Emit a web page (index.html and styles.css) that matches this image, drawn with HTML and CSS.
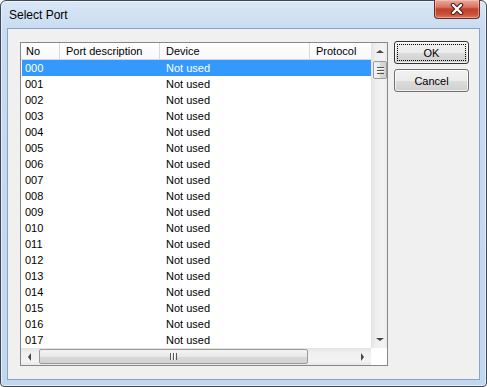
FILE: index.html
```html
<!DOCTYPE html>
<html lang="en">
<head>
    <meta charset="UTF-8">
    <title>Select Port</title>
    <link rel="stylesheet" href="styles.css">
</head>
<body>
    <div class="window">
        <div class="titlebar">
            <span class="title">Select Port</span>
            <button class="close" aria-label="Close">
                <svg width="14" height="12" viewBox="0 0 14 12">
                    <path d="M3 2 L11 10 M11 2 L3 10" stroke="#4a1a14" stroke-width="4.4" stroke-linecap="round"/>
                    <path d="M3 2 L11 10 M11 2 L3 10" stroke="#ffffff" stroke-width="2.4" stroke-linecap="round"/>
                </svg>
            </button>
        </div>
        <div class="client">
            <div class="listview">
                <div class="viewport">
                    <div class="header">
                        <div class="hcol col-no">No</div>
                        <div class="hcol col-desc">Port description</div>
                        <div class="hcol col-dev">Device</div>
                        <div class="hcol col-proto">Protocol</div>
                    </div>
                    <div class="rows">
                        <div class="row selected"><span class="c-no">000</span><span class="c-desc"></span><span class="c-dev">Not used</span><span class="c-proto"></span></div>
                        <div class="row"><span class="c-no">001</span><span class="c-desc"></span><span class="c-dev">Not used</span><span class="c-proto"></span></div>
                        <div class="row"><span class="c-no">002</span><span class="c-desc"></span><span class="c-dev">Not used</span><span class="c-proto"></span></div>
                        <div class="row"><span class="c-no">003</span><span class="c-desc"></span><span class="c-dev">Not used</span><span class="c-proto"></span></div>
                        <div class="row"><span class="c-no">004</span><span class="c-desc"></span><span class="c-dev">Not used</span><span class="c-proto"></span></div>
                        <div class="row"><span class="c-no">005</span><span class="c-desc"></span><span class="c-dev">Not used</span><span class="c-proto"></span></div>
                        <div class="row"><span class="c-no">006</span><span class="c-desc"></span><span class="c-dev">Not used</span><span class="c-proto"></span></div>
                        <div class="row"><span class="c-no">007</span><span class="c-desc"></span><span class="c-dev">Not used</span><span class="c-proto"></span></div>
                        <div class="row"><span class="c-no">008</span><span class="c-desc"></span><span class="c-dev">Not used</span><span class="c-proto"></span></div>
                        <div class="row"><span class="c-no">009</span><span class="c-desc"></span><span class="c-dev">Not used</span><span class="c-proto"></span></div>
                        <div class="row"><span class="c-no">010</span><span class="c-desc"></span><span class="c-dev">Not used</span><span class="c-proto"></span></div>
                        <div class="row"><span class="c-no">011</span><span class="c-desc"></span><span class="c-dev">Not used</span><span class="c-proto"></span></div>
                        <div class="row"><span class="c-no">012</span><span class="c-desc"></span><span class="c-dev">Not used</span><span class="c-proto"></span></div>
                        <div class="row"><span class="c-no">013</span><span class="c-desc"></span><span class="c-dev">Not used</span><span class="c-proto"></span></div>
                        <div class="row"><span class="c-no">014</span><span class="c-desc"></span><span class="c-dev">Not used</span><span class="c-proto"></span></div>
                        <div class="row"><span class="c-no">015</span><span class="c-desc"></span><span class="c-dev">Not used</span><span class="c-proto"></span></div>
                        <div class="row"><span class="c-no">016</span><span class="c-desc"></span><span class="c-dev">Not used</span><span class="c-proto"></span></div>
                        <div class="row"><span class="c-no">017</span><span class="c-desc"></span><span class="c-dev">Not used</span><span class="c-proto"></span></div>
                    </div>
                </div>
                <div class="vscroll">
                    <div class="sbtn"><span class="arrow up"></span></div>
                    <div class="vtrack">
                        <div class="vthumb"><span class="grip-h"></span></div>
                    </div>
                    <div class="sbtn"><span class="arrow down"></span></div>
                </div>
                <div class="hscroll">
                    <div class="sbtn"><span class="arrow left"></span></div>
                    <div class="htrack">
                        <div class="hthumb"><span class="grip-v"></span></div>
                    </div>
                    <div class="sbtn"><span class="arrow right"></span></div>
                </div>
                <div class="corner"></div>
            </div>
            <div class="buttons">
                <button class="btn default">OK</button>
                <button class="btn">Cancel</button>
            </div>
        </div>
    </div>
</body>
</html>
```

FILE: styles.css
```css
body{
    margin: 0;
    background-color: #ffffff;
    font-family: "Liberation Sans", Arial, sans-serif;
}
.window{
    width: 487px;
    height: 387px;
    box-sizing: border-box;
    border: 1px solid #3e4753;
    border-radius: 6px 6px 4px 4px;
    padding: 0 6px 6px 6px;
    display: flex;
    flex-direction: column;
    background: linear-gradient(#dae7f6, #c7dbf1 30px, #c2d7f0);
    box-shadow: inset 0 0 0 1px rgba(255,255,255,0.55);
}
.titlebar{
    height: 27px;
    display: flex;
    align-items: center;
    padding-left: 2px;
}
.title{
    font-size: 12px;
    color: #000;
}
.close{
    margin-left: auto;
    align-self: flex-start;
    margin-top: -1px;
    width: 46px;
    height: 19px;
    padding: 0;
    border: 1px solid #6d2a22;
    border-top: none;
    border-radius: 0 0 4px 4px;
    background: linear-gradient(#e9ab9c, #d8735f 40%, #c23e2b 50%, #cb5138 80%, #d97a5c);
    box-shadow: inset 0 0 0 1px rgba(255,220,210,0.45);
    display: flex;
    align-items: center;
    justify-content: center;
}
.client{
    flex: 1;
    display: flex;
    align-items: flex-start;
    border: 1px solid #8aa3c2;
    background-color: #f0f0f0;
    padding: 13px 10px 0 12px;
    font-size: 11px;
}
.listview{
    width: 367px;
    height: 322px;
    border: 1px solid #828790;
    background-color: #fff;
    display: grid;
    grid-template-columns: 350px 17px;
    grid-template-rows: 305px 17px;
    overflow: hidden;
}
.viewport{
    overflow: hidden;
    white-space: nowrap;
}
.header{
    display: flex;
    height: 16px;
    border-bottom: 1px solid #d5d5d5;
    background: linear-gradient(#ffffff, #f7f8fa);
}
.hcol{
    flex-shrink: 0;
    box-sizing: border-box;
    line-height: 16px;
    padding-left: 6px;
    border-right: 1px solid #d6d9de;
}
.hcol.col-no{ width: 39px; padding-left: 5px; }
.hcol.col-desc{ width: 100px; }
.hcol.col-dev{ width: 150px; }
.hcol.col-proto{ width: 100px; }
.row{
    display: flex;
    height: 16px;
    line-height: 16px;
    margin-left: 1px;
    color: #000;
}
.row span{
    flex-shrink: 0;
    box-sizing: border-box;
    padding-left: 6px;
}
.row .c-no{ width: 38px; padding-left: 3px; }
.row .c-desc{ width: 100px; }
.row .c-dev{ width: 150px; }
.row .c-proto{ width: 100px; }
.row.selected{
    background-color: #3399ff;
    color: #fff;
}
.vscroll{
    grid-row: 1 / 3;
    grid-column: 2;
    height: 305px;
    display: flex;
    flex-direction: column;
    background: linear-gradient(90deg, #e3e3e3, #efefef 25%, #f3f3f3 75%, #e8e8e8);
}
.hscroll{
    display: flex;
    background: linear-gradient(#e3e3e3, #efefef 25%, #f3f3f3 75%, #e8e8e8);
}
.corner{
    background-color: #f0f0f0;
}
.sbtn{
    width: 17px;
    height: 17px;
    flex-shrink: 0;
    display: flex;
    align-items: center;
    justify-content: center;
}
.vtrack, .htrack{
    flex: 1;
    display: flex;
}
.vtrack{ flex-direction: column; padding: 1px 1px 0 2px; }
.htrack{ padding: 1px 0 0 1px; }
.vthumb, .hthumb{
    box-sizing: border-box;
    border: 1px solid #9a9a9a;
    border-radius: 2px;
    display: flex;
    align-items: center;
    justify-content: center;
}
.vthumb{
    height: 18px;
    background: linear-gradient(90deg, #f4f4f4, #e8e8e8 50%, #d9d9d9 51%, #d2d2d2);
}
.hthumb{
    width: 269px;
    height: 15px;
    background: linear-gradient(#f4f4f4, #e8e8e8 50%, #d9d9d9 51%, #d2d2d2);
}
.grip-h{
    width: 7px;
    height: 7px;
    background: repeating-linear-gradient(#555 0 1px, #fafafa 1px 2px, transparent 2px 3px);
}
.grip-v{
    width: 7px;
    height: 7px;
    background: repeating-linear-gradient(90deg, #555 0 1px, #fafafa 1px 2px, transparent 2px 3px);
}
.arrow{
    width: 0;
    height: 0;
    border: 4px solid transparent;
}
.arrow.up{ border-bottom-color: #444; border-top-width: 0; border-bottom-width: 3px; }
.arrow.down{ border-top-color: #444; border-bottom-width: 0; border-top-width: 3px; }
.arrow.left{ border-right-color: #444; border-left-width: 0; border-right-width: 3px; }
.arrow.right{ border-left-color: #444; border-right-width: 0; border-left-width: 3px; }
.buttons{
    display: flex;
    flex-direction: column;
    gap: 5px;
    margin-left: 6px;
    margin-top: -1px;
}
.btn{
    position: relative;
    width: 75px;
    height: 23px;
    padding: 0;
    font-family: "Liberation Sans", Arial, sans-serif;
    font-size: 11px;
    color: #000;
    border: 1px solid #707070;
    border-radius: 3px;
    background: linear-gradient(#f2f2f2, #ebebeb 50%, #dddddd 51%, #cfcfcf);
    box-shadow: inset 0 0 0 1px rgba(255,255,255,0.7);
}
.btn.default{
    border-color: #333;
}
.btn.default::after{
    content: "";
    position: absolute;
    inset: 2px;
    border: 1px dotted #000;
}
```
